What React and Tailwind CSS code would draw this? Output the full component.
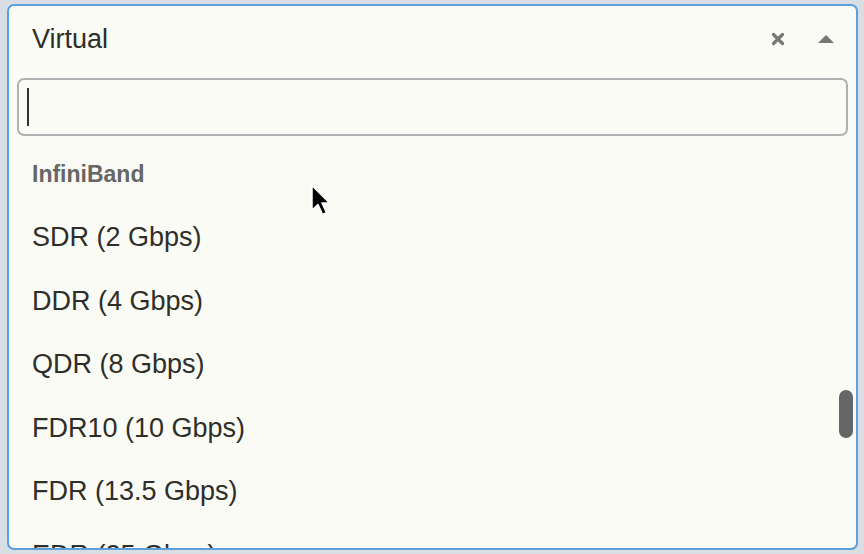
import React from 'react';

const options = [
  'SDR (2 Gbps)',
  'DDR (4 Gbps)',
  'QDR (8 Gbps)',
  'FDR10 (10 Gbps)',
  'FDR (13.5 Gbps)',
  'EDR (25 Gbps)',
];

const App = () => {
  return (
    <div className="w-[864px] h-[554px] overflow-hidden bg-[#d9dee4] pt-[4px] pl-[7px] relative" style={{ fontFamily: '"Liberation Sans", Arial, sans-serif' }}>
      {/* select box */}
      <div className="w-[851px] h-[546px] border-2 border-[#5b9fdc] rounded-[7px] bg-[#fbfbf5] flex flex-col overflow-hidden relative">
        {/* selected value */}
        <div className="h-[72px] shrink-0 flex items-center pb-[6px] pl-[23px] pr-[22px]">
          <span className="text-[27px] text-[#2e2e2a] flex-1">Virtual</span>
          <svg width="14" height="14" viewBox="0 0 14 14" className="mr-[33px]">
            <path d="M2.5 2.5 L11.5 11.5 M11.5 2.5 L2.5 11.5" stroke="#777" strokeWidth="3.2" strokeLinecap="round" />
          </svg>
          <svg width="16" height="8" viewBox="0 0 16 8">
            <path d="M0 8 L8 0 L16 8 Z" fill="#777" />
          </svg>
        </div>

        {/* search */}
        <div className="px-[8px] shrink-0">
          <div className="h-[58px] rounded-[7px] border-2 border-[#b0b0b0] flex items-center pl-[8px]">
            <div className="w-[2px] h-[38px] bg-[#333]" />
          </div>
        </div>

        {/* list */}
        <div className="flex-1 pt-[6px] relative">
          <div className="h-[63.5px] flex items-center pl-[23px] text-[23px] font-bold text-[#666]">InfiniBand</div>
          {options.map((o) => (
            <div key={o} className="h-[63.5px] flex items-center pl-[23px] text-[27px] text-[#2e2e2a]">{o}</div>
          ))}
          <div className="absolute right-[3px] top-[254px] w-[14px] h-[48px] rounded-full bg-[#666]" />
        </div>
      </div>

      {/* mouse pointer */}
      <svg width="22" height="34" viewBox="0 0 22 34" className="absolute left-[310px] top-[184px]">
        <path d="M2 1.5 L2 26 L8 20.5 L12.5 30.5 L16.5 28.8 L12 19 L19.5 19 Z" fill="#000" stroke="#fff" strokeWidth="1.5" strokeLinejoin="round" />
      </svg>
    </div>
  );
};

export default App;
